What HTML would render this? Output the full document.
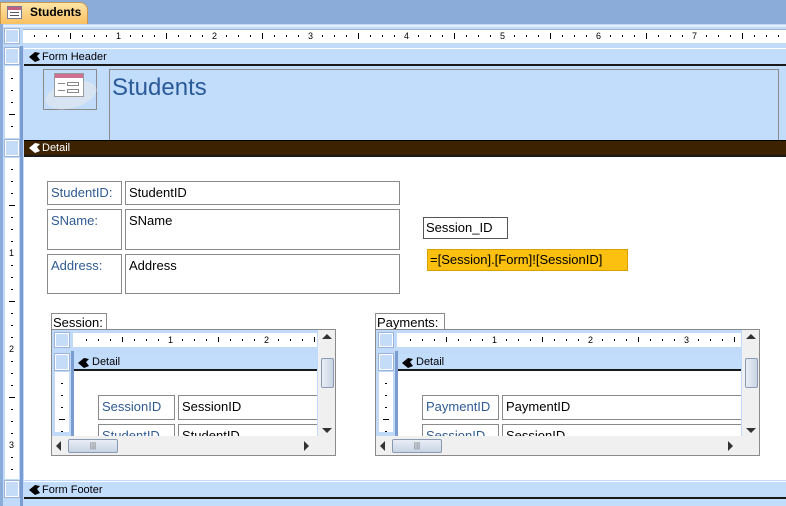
<!DOCTYPE html>
<html><head><meta charset="utf-8"><style>
*{margin:0;padding:0;box-sizing:border-box}
body{width:786px;height:506px;overflow:hidden;position:relative;background:#c2dafa;font-family:"Liberation Sans",sans-serif;font-size:11px}
.a{position:absolute}
.bx{position:absolute;border:1px solid #8a8a8a;background:#fff}
.lb{color:#2f5b92;font-size:13px;padding:3px 3px}
.tx{color:#000;font-size:13px;padding:3px 3px}
.bar{position:absolute;background:#c2dcfc;border-top:1px solid #fff;border-bottom:2px solid #1a1a1a;font-size:11px;padding-left:18px;line-height:16px;color:#000}
.ar{position:absolute;width:11px;height:10px}
.sq{position:absolute;background:#c4dcf8;border:1px solid #fff;outline:1px solid #9ab4d8}
.tk{position:absolute;background:#000}
.num{position:absolute;font-size:9px;line-height:9px;color:#000}
</style></head><body>
<div class="a" style="left:0;top:0;width:786px;height:24px;background:#8babd9"></div>
<div class="a" style="left:0;top:2px;width:88px;height:22px;background:linear-gradient(#fde4a8,#f8c060);border:1px solid #c89850;border-bottom:none;border-radius:0 8px 0 0"></div>
<div class="a" style="left:7px;top:6px;width:15px;height:13px;background:#fff;border:1px solid #7a7a9a"><div class="a" style="left:0;top:0;width:13px;height:3px;background:#c06080"></div><div class="a" style="left:2px;top:5px;width:9px;height:1px;background:#556"></div><div class="a" style="left:2px;top:8px;width:9px;height:1px;background:#556"></div></div>
<div class="a" style="left:30px;top:5px;font-weight:bold;font-size:12px">Students</div>
<div class="a" style="left:0;top:24px;width:786px;height:482px;background:#c2dafa;border-left:3px solid #8babd9"></div>
<div class="a" style="left:3px;top:25px;width:783px;height:2px;background:#e4eefc"></div>
<div class="sq" style="left:5px;top:29px;width:14px;height:14px"></div>
<div class="a" style="left:23px;top:29px;width:763px;height:14px;background:#fff;border-top:1px solid #9ab4d8"></div>
<div class="a" style="left:20px;top:46px;width:3px;height:460px;background:#7a9cd0"></div>
<div class="sq" style="left:5px;top:48px;width:14px;height:16px"></div>
<div class="sq" style="left:5px;top:140px;width:14px;height:16px"></div>
<div class="sq" style="left:5px;top:481px;width:14px;height:16px"></div>
<div class="a" style="left:5px;top:66px;width:14px;height:72px;background:#fff"></div>
<div class="a" style="left:5px;top:158px;width:14px;height:321px;background:#fff"></div>
<div class="bar" style="left:24px;top:48px;width:762px;height:18px">Form Header</div>
<svg class="ar" style="left:29px;top:52px" viewBox="0 0 11 10"><polygon points="0,5 6,0 11,1 8,4 11,8 6,10" fill="#000"/></svg>
<div class="a" style="left:24px;top:66px;width:762px;height:74px;background:#c2dcfc"></div>
<div class="a" style="left:43px;top:69px;width:54px;height:41px;border:1px solid #8a8a8a"></div>
<div class="a" style="left:45px;top:82px;width:52px;height:26px;border-radius:50%;background:#d8e4f2;transform:rotate(-15deg)"></div>
<div class="a" style="left:54px;top:73px;width:30px;height:24px;background:#fff;border:1px solid #999"><div class="a" style="left:0;top:0;width:28px;height:4px;background:#d07090"></div><div class="a" style="left:3px;top:9px;width:7px;height:1px;background:#888"></div><div class="a" style="left:12px;top:8px;width:12px;height:4px;border:1px solid #888"></div><div class="a" style="left:3px;top:16px;width:7px;height:1px;background:#888"></div><div class="a" style="left:12px;top:15px;width:12px;height:4px;border:1px solid #888"></div></div>
<div class="a" style="left:109px;top:69px;width:670px;height:72px;border:1px solid #8a8a8a;border-bottom:none"></div>
<div class="a" style="left:112px;top:74px;font-size:24px;color:#2b5a98">Students</div>
<div class="a" style="left:24px;top:140px;width:762px;height:17px;background:#3c2200;border-top:1px solid #000;border-bottom:2px solid #1a1a1a"></div>
<div class="a" style="left:42px;top:142px;color:#fff;font-size:11px;line-height:13px">Detail</div>
<svg class="ar" style="left:29px;top:143px" viewBox="0 0 11 10"><polygon points="0,5 6,0 11,1 8,4 11,8 6,10" fill="#fff"/></svg>
<div class="a" style="left:24px;top:157px;width:762px;height:323px;background:#fff"></div>
<div class="bx lb" style="left:47px;top:181px;width:75px;height:24px">StudentID:</div>
<div class="bx tx" style="left:125px;top:181px;width:275px;height:24px">StudentID</div>
<div class="bx lb" style="left:47px;top:209px;width:75px;height:41px">SName:</div>
<div class="bx tx" style="left:125px;top:209px;width:275px;height:41px">SName</div>
<div class="bx lb" style="left:47px;top:254px;width:75px;height:40px">Address:</div>
<div class="bx tx" style="left:125px;top:254px;width:275px;height:40px">Address</div>
<div class="bx tx" style="left:423px;top:217px;width:85px;height:22px;border-color:#555;padding:2px 2px">Session_ID</div>
<div class="a" style="left:427px;top:249px;width:201px;height:22px;background:#fcc010;border:1px solid #d8a000;font-size:13px;padding:2px 2px">=[Session].[Form]![SessionID]</div>
<div class="bx tx" style="left:51px;top:313px;width:56px;height:18px;padding:1px 1px;line-height:16px;overflow:hidden">Session:</div>
<div class="bx tx" style="left:375px;top:313px;width:70px;height:18px;padding:1px 1px;line-height:16px;overflow:hidden">Payments:</div>
<div id="sf1" class="bx" style="left:51px;top:329px;width:285px;height:127px;background:#c2dafa;overflow:hidden"></div>
<div id="sf2" class="bx" style="left:375px;top:329px;width:385px;height:127px;background:#c2dafa;overflow:hidden"></div>
<div class="bar" style="left:24px;top:481px;width:762px;height:18px">Form Footer</div>
<svg class="ar" style="left:29px;top:485px" viewBox="0 0 11 10"><polygon points="0,5 6,0 11,1 8,4 11,8 6,10" fill="#000"/></svg>
<div class="a" style="left:24px;top:499px;width:762px;height:7px;background:#c2dcfc"></div>
<script>
function tick(p,x,y,w,h){var d=document.createElement('div');d.className='tk';d.style.cssText='left:'+x+'px;top:'+y+'px;width:'+w+'px;height:'+h+'px';p.appendChild(d);}
function num(p,x,y,t){var d=document.createElement('div');d.className='num';d.style.left=x+'px';d.style.top=y+'px';d.textContent=t;p.appendChild(d);}
var b=document.body;
for(var i=1;i<64;i++){var x=22+i*12;if(x>784)break;if(i%8==0)num(b,x-2,32,i/8);else if(i%4==0)tick(b,x,33,1,6);else tick(b,x,35,1,2);}
for(var i=1;i<6;i++){var y=66+i*12;if(i%4==0)tick(b,9,y,6,1);else tick(b,11,y,2,1);}
for(var i=1;i<27;i++){var y=157+i*12;if(y>478)break;if(i%8==0)num(b,9,y-4,i/8);else if(i%4==0)tick(b,9,y,6,1);else tick(b,11,y,2,1);}
function sub(id,W,lb1,tx1,lb2,tx2,lw){
var s=document.getElementById(id);var h='';
h+='<div class="sq" style="left:3px;top:3px;width:14px;height:14px"></div>';
h+='<div class="a" style="left:21px;top:3px;width:'+(W-41)+'px;height:14px;background:#fff"></div>';
h+='<div class="sq" style="left:3px;top:24px;width:14px;height:16px"></div>';
h+='<div class="a" style="left:3px;top:42px;width:14px;height:60px;background:#fff"></div>';
h+='<div class="a" style="left:19px;top:21px;width:3px;height:85px;background:#7a9cd0"></div>';
h+='<div class="a" style="left:22px;top:24px;width:'+(W-42)+'px;height:17px;background:#c2dcfc;border-bottom:2px solid #1a1a1a;font-size:11px;padding-left:18px;line-height:16px">Detail</div>';
h+='<svg class="ar" style="left:26px;top:28px" viewBox="0 0 11 10"><polygon points="0,5 6,0 11,1 8,4 11,8 6,10" fill="#000"/></svg>';
h+='<div class="a" style="left:22px;top:41px;width:'+(W-42)+'px;height:65px;background:#fff"></div>';
h+='<div class="bx lb" style="left:46px;top:65px;width:'+lw+'px;height:25px;padding:3px">'+lb1+'</div>';
h+='<div class="bx tx" style="left:126px;top:65px;width:'+(W-146)+'px;height:25px;border-right:none">'+tx1+'</div>';
h+='<div class="bx lb" style="left:46px;top:94px;width:'+lw+'px;height:25px;padding:3px">'+lb2+'</div>';
h+='<div class="bx tx" style="left:126px;top:94px;width:'+(W-146)+'px;height:25px;border-right:none">'+tx2+'</div>';
h+='<div class="a" style="left:'+(W-19)+'px;top:0;width:17px;height:106px;background:#f0f0f0"></div>';
h+='<div class="a" style="left:'+(W-16)+'px;top:28px;width:13px;height:30px;background:linear-gradient(90deg,#e8eef6,#c8d4e4);border:1px solid #8a9ab0;border-radius:2px"></div>';
h+='<div class="a" style="left:'+(W-15)+'px;top:4px;width:0;height:0;border-bottom:5px solid #333;border-left:5px solid transparent;border-right:5px solid transparent"></div>';
h+='<div class="a" style="left:'+(W-15)+'px;top:98px;width:0;height:0;border-top:5px solid #333;border-left:5px solid transparent;border-right:5px solid transparent"></div>';
h+='<div class="a" style="left:0;top:106px;width:'+W+'px;height:20px;background:#f0f0f0"></div>';
h+='<div class="a" style="left:16px;top:109px;width:50px;height:14px;background:linear-gradient(#e8eef6,#c8d4e4);border:1px solid #8a9ab0;border-radius:2px;text-align:center;font-size:8px;color:#666;line-height:12px">|||</div>';
h+='<div class="a" style="left:4px;top:111px;width:0;height:0;border-right:5px solid #333;border-top:5px solid transparent;border-bottom:5px solid transparent"></div>';
h+='<div class="a" style="left:'+(W-33)+'px;top:111px;width:0;height:0;border-left:5px solid #333;border-top:5px solid transparent;border-bottom:5px solid transparent"></div>';
s.innerHTML=h;
for(var i=1;i<40;i++){var x=22+i*12;if(x>W-22)break;if(i%8==0)num(s,x-2,6,i/8);else if(i%4==0)tick(s,x,7,1,5);else tick(s,x,9,1,2);}
for(var i=1;i<6;i++){var y=41+i*12;if(i%4==0)tick(s,7,y,6,1);else tick(s,9,y,2,1);}
}
sub('sf1',285,'SessionID','SessionID','StudentID','StudentID',77);
sub('sf2',385,'PaymentID','PaymentID','SessionID','SessionID',77);
</script>
</body></html>
